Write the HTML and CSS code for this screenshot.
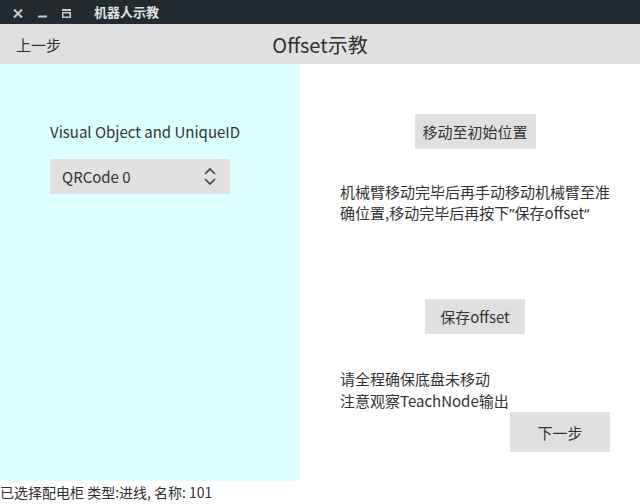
FILE: index.html
```html
<!DOCTYPE html>
<html lang="zh">
<head>
<meta charset="utf-8">
<title>机器人示教</title>
<link rel="stylesheet" href="styles.css">
</head>
<body>
<div class="window">
  <div class="titlebar">
    <span class="wbtn wclose"><svg width="10" height="9" viewBox="0 0 10 9"><path d="M1 0.5 L9 8.5 M9 0.5 L1 8.5" stroke="#c8ccce" stroke-width="2"/></svg></span>
    <span class="wbtn wmin"><svg width="9" height="9" viewBox="0 0 9 9"><rect x="0" y="6.5" width="9" height="2" fill="#c8ccce"/></svg></span>
    <span class="wbtn wmax"><svg width="9" height="9" viewBox="0 0 9 9"><rect x="0" y="0" width="9" height="2" fill="#c8ccce"/><rect x="0.75" y="3.75" width="7.5" height="4.5" fill="none" stroke="#c8ccce" stroke-width="1.5"/></svg></span>
    <span class="wtitle">机器人示教</span>
  </div>
  <div class="header">
    <span class="back">上一步</span>
    <span class="title">Offset示教</span>
    <span></span>
  </div>
  <div class="main">
    <div class="left">
      <div class="label">Visual Object and UniqueID</div>
      <div class="combo">
        <span>QRCode 0</span>
        <svg class="chev" width="12" height="19" viewBox="0 0 12 19"><path d="M1 7 L6 2 L11 7 M1 12 L6 17 L11 12" fill="none" stroke="#404040" stroke-width="1.6"/></svg>
      </div>
    </div>
    <div class="right">
      <div class="btn btn-init">移动至初始位置</div>
      <p class="hint hint1">机械臂移动完毕后再手动移动机械臂至准<br>确位置,移动完毕后再按下<span class="q">”</span>保存offset<span class="q">“</span></p>
      <div class="btn btn-save">保存offset</div>
      <p class="hint hint2">请全程确保底盘未移动<br>注意观察TeachNode输出</p>
      <div class="btn btn-next">下一步</div>
    </div>
  </div>
  <div class="status">已选择配电柜 类型:进线, 名称: 101</div>
</div>
</body>
</html>
```

FILE: styles.css
```css
* { box-sizing: border-box; }
html, body { margin: 0; padding: 0; background: #ffffff; }
body {
  font-family: "Noto Sans CJK SC", "Noto Sans", sans-serif;
  color: #333333;
}
.window {
  width: 640px;
  height: 504px;
  display: flex;
  flex-direction: column;
  overflow: hidden;
}
.titlebar {
  height: 24px;
  background: #232b31;
  display: flex;
  align-items: center;
  padding-left: 13px;
}
.wbtn { display: flex; align-items: center; height: 24px; padding-top: 3px; }
.wclose { width: 25px; }
.wmin { width: 24px; }
.wmax { width: 32px; }
.wtitle {
  font-size: 13px;
  font-weight: bold;
  color: #dfe2e4;
  line-height: 24px;
}
.header {
  height: 40px;
  background: #e0e0e0;
  display: grid;
  grid-template-columns: 1fr auto 1fr;
  align-items: center;
}
.back {
  font-size: 15px;
  padding-left: 16px;
  color: #303030;
}
.title {
  font-size: 20px;
  color: #303030;
}
.main {
  height: 417px;
  display: flex;
}
.left {
  width: 300px;
  background: #dcffff;
  padding: 58px 0 0 50px;
}
.label {
  font-size: 15px;
  line-height: 20px;
}
.combo {
  margin-top: 17px;
  width: 180px;
  height: 35px;
  background: #e0e0e0;
  display: flex;
  align-items: center;
  justify-content: space-between;
  padding: 0 14px 0 12px;
  font-size: 15px;
}
.right {
  flex: 1;
  display: flex;
  flex-direction: column;
  align-items: center;
  padding: 50px 0 0 10px;
}
.btn {
  background: #e0e0e0;
  font-size: 15px;
  display: flex;
  align-items: center;
  justify-content: center;
}
.btn-init { width: 121px; height: 35px; }
.btn-save { width: 100px; height: 35px; margin-top: 75px; }
.btn-next { width: 100px; height: 40px; align-self: flex-end; margin-right: 30px; }
.hint {
  align-self: flex-start;
  margin: 0 0 0 30px;
  font-size: 15px;
  line-height: 21px;
}
.q { font-family: "Noto Sans", sans-serif; }
.hint1 { margin-top: 32px; }
.hint2 { margin-top: 34px; line-height: 22px; }
.status {
  height: 23px;
  font-size: 14px;
  line-height: 23px;
  padding-left: 0;
  color: #303030;
}
```
